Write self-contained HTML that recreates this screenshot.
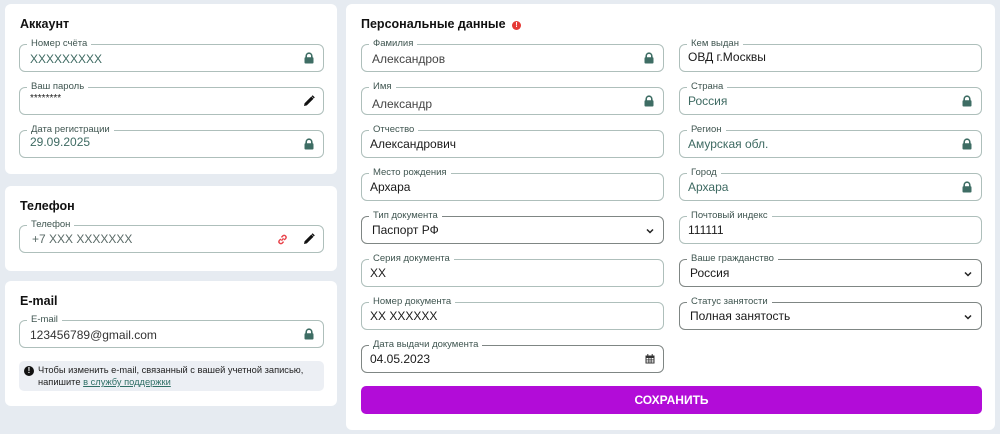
<!DOCTYPE html>
<html><head><meta charset="utf-8"><style>
*{box-sizing:border-box;margin:0;padding:0}
body{width:1000px;height:434px;background:#e6ebf1;font-family:"Liberation Sans",sans-serif;position:relative;overflow:hidden}
.card{position:absolute;background:#fff;border-radius:6px}
h2{position:absolute;font-size:12.5px;font-weight:bold;color:#111}
.f{position:absolute;height:28px;border:1px solid #aebfbb;border-radius:6px;background:#fff}
.f.s{border-color:#7f8684}
.f label{position:absolute;top:-7px;left:7px;background:#fff;padding:0 4px;font-size:9.5px;line-height:12px;color:#3f5550}
.f .v{position:absolute;left:10px;top:0;line-height:27px;font-size:12px;color:#1a1a1a}
.f .v.l{color:#3e6a62}
.ic{position:absolute;top:7px;right:8px}
</style></head><body>
<svg width="0" height="0" style="position:absolute"><defs>
<symbol id="lock" viewBox="0 0 12 12"><path d="M3.2 5.5V4a2.8 2.8 0 0 1 5.6 0v1.5" fill="none" stroke="#3e6d64" stroke-width="1.6"/><rect x="1.5" y="5.3" width="9" height="6.2" rx="1" fill="#3e6d64"/></symbol>
<symbol id="pen" viewBox="0 0 12 12"><path d="M1 11l.6-2.8L8.3 1.5l2.2 2.2-6.7 6.7z" fill="#111"/><path d="M8.6 1.2l1-1 2.2 2.2-1 1z" fill="#111"/></symbol>
<symbol id="chev" viewBox="0 0 10 10"><path d="M2 3.5l3 3 3-3" fill="none" stroke="#222" stroke-width="1.5"/></symbol>
</defs></svg>

<div class="card" style="left:5px;top:4px;width:332px;height:170px"></div>
<div class="card" style="left:5px;top:186px;width:332px;height:85px"></div>
<div class="card" style="left:5px;top:281px;width:332px;height:125px"></div>
<div class="card" style="left:346px;top:4px;width:649px;height:426px"></div>

<h2 style="left:20px;top:17px">Аккаунт</h2>
<div class="f" style="left:19px;top:44px;width:305px"><label>Номер счёта</label><div class="v l" style="top:1px">XXXXXXXXX</div><svg class="ic" width="12" height="12"><use href="#lock"/></svg></div>
<div class="f" style="left:19px;top:87px;width:305px"><label>Ваш пароль</label><div class="v" style="top:-3px;font-size:10px">********</div><svg class="ic" width="12" height="12"><use href="#pen"/></svg></div>
<div class="f" style="left:19px;top:130px;width:305px"><label>Дата регистрации</label><div class="v l" style="top:-2px">29.09.2025</div><svg class="ic" width="12" height="12"><use href="#lock"/></svg></div>

<h2 style="left:20px;top:199px">Телефон</h2>
<div class="f" style="left:19px;top:225px;width:305px"><label>Телефон</label><div class="v l" style="left:12px;color:#5a6a67">+7 XXX XXXXXXX</div>
<svg style="position:absolute;top:7px;right:34px" width="13" height="13" viewBox="0 0 12 12"><path d="M5 7l2-2M4.5 5.5L3 7a1.8 1.8 0 0 0 2.5 2.5L7 8M7.5 6.5L9 5a1.8 1.8 0 0 0-2.5-2.5L5 4" fill="none" stroke="#e8434a" stroke-width="1.3"/></svg>
<svg class="ic" width="12" height="12"><use href="#pen"/></svg></div>

<h2 style="left:20px;top:294px">E-mail</h2>
<div class="f" style="left:19px;top:320px;width:305px"><label>E-mail</label><div class="v" style="top:1px;color:#333">123456789@gmail.com</div><svg class="ic" width="12" height="12"><use href="#lock"/></svg></div>
<div style="position:absolute;left:19px;top:361px;width:305px;height:30px;background:#eceff4;border-radius:5px;font-size:9.3px;line-height:12px;color:#222;padding:3px 0 0 19px;white-space:nowrap">
<span style="position:absolute;left:5px;top:5px;width:10px;height:10px;border-radius:50%;background:#111;color:#fff;font-size:8px;line-height:10px;text-align:center;font-weight:bold">!</span>
Чтобы изменить e-mail, связанный с вашей учетной записью,<br>напишите <span style="color:#2f6f66;text-decoration:underline">в службу поддержки</span></div>

<h2 style="left:361px;top:17px">Персональные данные <span style="display:inline-block;width:9px;height:9px;border-radius:50%;background:#e53935;color:#fff;font-size:7px;line-height:9px;text-align:center;vertical-align:1px;margin-left:3px">!</span></h2>

<div class="f" style="left:361px;top:44px;width:303px"><label>Фамилия</label><div class="v l" style="top:1px;color:#444">Александров</div><svg class="ic" width="12" height="12"><use href="#lock"/></svg></div>
<div class="f" style="left:361px;top:87px;width:303px"><label>Имя</label><div class="v l" style="top:3px;color:#444">Александр</div><svg class="ic" width="12" height="12"><use href="#lock"/></svg></div>
<div class="f" style="left:361px;top:130px;width:303px"><label>Отчество</label><div class="v" style="left:8px">Александрович</div></div>
<div class="f" style="left:361px;top:173px;width:303px"><label>Место рождения</label><div class="v" style="left:8px">Архара</div></div>
<div class="f s" style="left:361px;top:216px;width:303px"><label>Тип документа</label><div class="v">Паспорт РФ</div><svg class="ic" width="10" height="10" style="top:9px"><use href="#chev"/></svg></div>
<div class="f" style="left:361px;top:259px;width:303px"><label>Серия документа</label><div class="v" style="left:8px">XX</div></div>
<div class="f" style="left:361px;top:302px;width:303px"><label>Номер документа</label><div class="v" style="left:8px">XX XXXXXX</div></div>
<div class="f s" style="left:361px;top:345px;width:303px"><label>Дата выдачи документа</label><div class="v" style="left:8px">04.05.2023</div>
<svg class="ic" width="10" height="10" viewBox="0 0 10 10" style="top:8px"><rect x="0.5" y="1.5" width="9" height="8" fill="#333"/><rect x="1.5" y="4" width="7" height="4.5" fill="#fff"/><path d="M1.5 5.5h7M1.5 7h7M3.3 4v4.5M5 4v4.5M6.7 4v4.5" stroke="#333" stroke-width=".6"/><rect x="2.3" y="0" width="1" height="2.5" fill="#333"/><rect x="6.7" y="0" width="1" height="2.5" fill="#333"/></svg></div>

<div class="f" style="left:679px;top:44px;width:303px"><label>Кем выдан</label><div class="v" style="left:8px;top:-1px">ОВД г.Москвы</div></div>
<div class="f" style="left:679px;top:87px;width:303px"><label>Страна</label><div class="v l" style="left:8px">Россия</div><svg class="ic" width="12" height="12"><use href="#lock"/></svg></div>
<div class="f" style="left:679px;top:130px;width:303px"><label>Регион</label><div class="v l" style="left:8px">Амурская обл.</div><svg class="ic" width="12" height="12"><use href="#lock"/></svg></div>
<div class="f" style="left:679px;top:173px;width:303px"><label>Город</label><div class="v l" style="left:8px">Архара</div><svg class="ic" width="12" height="12"><use href="#lock"/></svg></div>
<div class="f" style="left:679px;top:216px;width:303px"><label>Почтовый индекс</label><div class="v" style="left:8px">111111</div></div>
<div class="f s" style="left:679px;top:259px;width:303px"><label>Ваше гражданство</label><div class="v">Россия</div><svg class="ic" width="10" height="10" style="top:9px"><use href="#chev"/></svg></div>
<div class="f s" style="left:679px;top:302px;width:303px"><label>Статус занятости</label><div class="v">Полная занятость</div><svg class="ic" width="10" height="10" style="top:9px"><use href="#chev"/></svg></div>

<div style="position:absolute;left:361px;top:386px;width:621px;height:28px;background:#b20cd8;border-radius:5px;color:#fff;font-size:12px;font-weight:bold;text-align:center;line-height:28px">СОХРАНИТЬ</div>
</body></html>
